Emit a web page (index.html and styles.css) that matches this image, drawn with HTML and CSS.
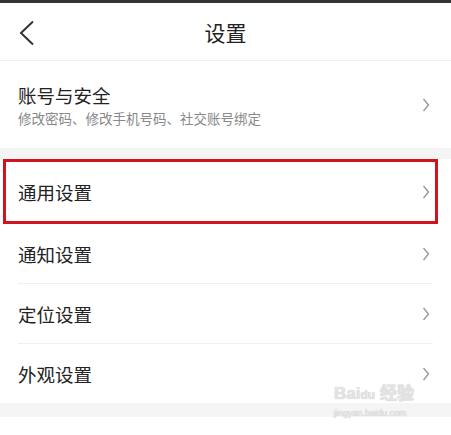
FILE: index.html
```html
<!DOCTYPE html>
<html lang="zh-CN">
<head>
    <meta charset="UTF-8">
    <meta name="viewport" content="width=device-width, initial-scale=1.0">
    <link rel="stylesheet" href="styles.css">
    <title>设置</title>
</head>
<body>
    <div class="top-bar"></div>
    <header class="header">
        <svg class="back" width="16" height="26" viewBox="0 0 16 26">
            <polyline points="14,1.5 2,13 14,24.5" fill="none" stroke="#333" stroke-width="2" stroke-linejoin="miter"/>
        </svg>
        <h1 class="title">设置</h1>
    </header>

    <div class="group">
        <div class="row row-tall">
            <div class="row-text">
                <div class="row-title">账号与安全</div>
                <div class="row-sub">修改密码、修改手机号码、社交账号绑定</div>
            </div>
            <svg class="arrow" width="8" height="14" viewBox="0 0 8 14"><polyline points="1.5,1 6.5,7 1.5,13" fill="none" stroke="#999" stroke-width="1.4"/></svg>
        </div>
    </div>

    <div class="gap"></div>

    <div class="group">
        <div class="row highlight">
            <div class="row-title">通用设置</div>
            <svg class="arrow" width="8" height="14" viewBox="0 0 8 14"><polyline points="1.5,1 6.5,7 1.5,13" fill="none" stroke="#999" stroke-width="1.4"/></svg>
        </div>
        <div class="row">
            <div class="row-title">通知设置</div>
            <svg class="arrow" width="8" height="14" viewBox="0 0 8 14"><polyline points="1.5,1 6.5,7 1.5,13" fill="none" stroke="#999" stroke-width="1.4"/></svg>
        </div>
        <div class="row">
            <div class="row-title">定位设置</div>
            <svg class="arrow" width="8" height="14" viewBox="0 0 8 14"><polyline points="1.5,1 6.5,7 1.5,13" fill="none" stroke="#999" stroke-width="1.4"/></svg>
        </div>
        <div class="row last">
            <div class="row-title">外观设置</div>
            <svg class="arrow" width="8" height="14" viewBox="0 0 8 14"><polyline points="1.5,1 6.5,7 1.5,13" fill="none" stroke="#999" stroke-width="1.4"/></svg>
        </div>
    </div>

    <div class="gap gap-bottom"></div>

    <!-- watermark -->
    <div class="watermark">
        <div class="wm-logo">Bai<span class="wm-du">du</span> 经验</div>
        <div class="wm-url">jingyan.baidu.com</div>
    </div>
</body>
</html>
```

FILE: styles.css
```css
*{
    box-sizing: border-box;
}
html{
    font-size: 16px;
}
body{
    margin: 0;
    font-family: "Noto Sans CJK SC", "Noto Sans", sans-serif;
    background-color: #fff;
    color: #222;
    position: relative;
    min-height: 435px;
}
.top-bar{
    height: 3px;
    background-color: #333;
}
.header{
    height: 58px;
    display: flex;
    align-items: center;
    justify-content: center;
    position: relative;
    border-bottom: 1px solid #f0f0f0;
}
.back{
    position: absolute;
    left: 19px;
    top: 17px;
}
.title{
    margin: 0;
    font-size: 21px;
    font-weight: 400;
    color: #222;
}
.group{
    background-color: #fff;
}
.row{
    height: 60px;
    margin: 0 18px;
    display: flex;
    align-items: center;
    justify-content: space-between;
    padding-right: 3px;
    border-bottom: 1px solid #f0f0f0;
}
.row.last{
    border-bottom: none;
    height: 59px;
}
.row-tall{
    height: 87px;
    border-bottom: none;
}
.row-title{
    font-size: 18.5px;
    line-height: 22px;
    color: #222;
}
.row-sub{
    margin-top: 4px;
    font-size: 13.5px;
    line-height: 16px;
    color: #888;
}
.highlight{
    height: 65px;
    margin: 0 13px 0 3px;
    padding: 0 5px 0 12px;
    border: 3px solid #d0131c;
}
.arrow{
    display: block;
}
.gap{
    height: 11px;
    background-color: #f5f5f5;
}
.gap-bottom{
    height: 14px;
}
.watermark{
    position: absolute;
    left: 334px;
    top: 384px;
    color: #e4e4e4;
    font-family: "Liberation Sans", sans-serif;
    text-shadow: 0 0 1px #bbb;
}
.wm-logo{
    font-size: 17px;
    font-weight: 700;
    line-height: 20px;
}
.wm-du{
    font-size: 12px;
}
.wm-url{
    font-size: 9px;
    line-height: 12px;
    margin-top: 2px;
}
```
